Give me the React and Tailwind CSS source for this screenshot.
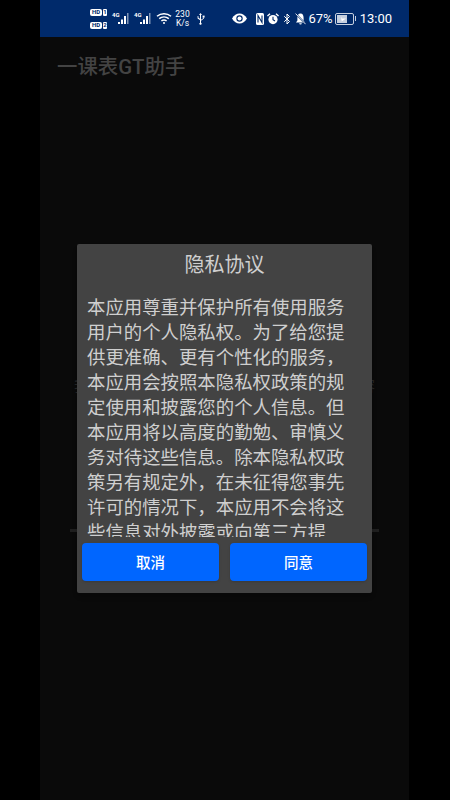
import React from 'react';
import { Bluetooth } from 'lucide-react';

const policy =
  '本应用尊重并保护所有使用服务用户的个人隐私权。为了给您提供更准确、更有个性化的服务，本应用会按照本隐私权政策的规定使用和披露您的个人信息。但本应用将以高度的勤勉、审慎义务对待这些信息。除本隐私权政策另有规定外，在未征得您事先许可的情况下，本应用不会将这些信息对外披露或向第三方提供。';

const SimBadge = ({ n }) => (
  <div className="flex items-center gap-[1px]">
    <span className="flex h-[7px] w-[12px] items-center justify-center rounded-[2px] bg-white text-[6px] font-bold leading-none text-[#002a6b]">HD</span>
    <span className="flex h-[7px] w-[4px] items-center justify-center rounded-[1px] bg-white text-[6px] font-bold leading-none text-[#002a6b]">{n}</span>
  </div>
);

const Signal = () => (
  <div className="relative h-[15px] w-[19px]">
    <span className="absolute left-0 top-0 text-[6px] font-bold leading-[7px] text-white">4G</span>
    <svg className="absolute left-0 top-0" width="19" height="15" viewBox="0 0 19 15">
      <rect x="6" y="11" width="2" height="2" fill="#fff" />
      <rect x="9" y="8.5" width="2" height="4.5" fill="#fff" />
      <rect x="12" y="5" width="2" height="8" fill="#fff" />
      <rect x="15" y="2" width="1.5" height="11" fill="#7f94b5" />
    </svg>
  </div>
);

const Wifi = () => (
  <svg width="16" height="13" viewBox="0 0 16 13" fill="none" stroke="#fff" strokeWidth="1.5">
    <path d="M1 4.2C5 .8 11 .8 15 4.2" />
    <path d="M3.2 6.6C6 4.3 10 4.3 12.8 6.6" />
    <path d="M5.4 9C6.9 7.8 9.1 7.8 10.6 9" />
    <circle cx="8" cy="11" r="1" fill="#fff" stroke="none" />
  </svg>
);

const UsbIcon = () => (
  <svg width="9" height="12" viewBox="0 0 9 12" fill="#fff">
    <path d="M4.5 0L6 2H5V8.4C5 9 5.3 9.3 5 9.6V10H5.4A1.1 1.1 0 1 1 3.6 10H4V2H3Z" />
    <path d="M1 3H2.4V4.6L4.2 6V7.2L1.6 5.4V3Z" />
    <rect x="6.6" y="2.6" width="2" height="2" />
    <path d="M7.2 4.4H8V5.6L5 7.8V6.8L7.2 5.2Z" />
  </svg>
);

const EyeIcon = () => (
  <svg width="15" height="11" viewBox="0 0 15 11">
    <path d="M0 5.5C2 2 4.6 .5 7.5 .5S13 2 15 5.5C13 9 10.4 10.5 7.5 10.5S2 9 0 5.5Z" fill="#fff" />
    <circle cx="7.5" cy="5.5" r="3.2" fill="#002a6b" />
    <circle cx="7.5" cy="5.5" r="2" fill="#fff" />
  </svg>
);

const Nfc = () => (
  <svg width="8" height="12" viewBox="0 0 8 12">
    <rect width="8" height="12" rx="1.5" fill="#fff" />
    <path d="M2 9.5V2.5L6 9.5V2.5" fill="none" stroke="#002a6b" strokeWidth="1.1" />
  </svg>
);

const AlarmIcon = () => (
  <svg width="12" height="12" viewBox="0 0 12 12">
    <circle cx="6" cy="6.6" r="4.6" fill="#fff" />
    <path d="M6 3.8V6.8L8 8" fill="none" stroke="#002a6b" strokeWidth="1.1" />
    <path d="M.4 3L3 .8M11.6 3L9 .8" stroke="#fff" strokeWidth="1.4" />
  </svg>
);

const BellIcon = () => (
  <svg width="11" height="12" viewBox="0 0 11 12">
    <path d="M5.5 .5C7.8 .5 8.6 2.6 8.6 5V7.6L10 9.4H1L2.4 7.6V5C2.4 2.6 3.2 .5 5.5 .5Z" fill="#fff" />
    <path d="M4.2 10.2H6.8A1.3 1.3 0 0 1 4.2 10.2Z" fill="#fff" />
    <path d="M1 1L10.5 11" stroke="#002a6b" strokeWidth="1.6" />
    <path d="M.6 .6L10.6 11.2" stroke="#fff" strokeWidth=".9" />
  </svg>
);

const Battery = () => (
  <div className="flex items-center gap-[1px]">
    <div className="flex h-[12px] w-[19px] items-center rounded-[2px] border border-[#c5cfdf] p-[1px]">
      <div className="flex h-full w-[67%] items-center justify-center bg-[#c5cfdf]">
        <svg width="9" height="6" viewBox="0 0 9 6"><path d="M0 3.4H4L5 0.5V2.6H9L4.6 5.5V3.4Z" fill="#fff" /></svg>
      </div>
    </div>
    <div className="h-[5px] w-[1px] bg-[#c5cfdf]" />
  </div>
);

const StatusBar = () => (
  <div className="flex h-[37px] shrink-0 items-center bg-[#002a6b] pl-[50px] pr-[17px] font-['Roboto',sans-serif] text-white">
    <div className="flex flex-col gap-[6px]">
      <SimBadge n="1" />
      <SimBadge n="2" />
    </div>
    <div className="ml-[5px] flex gap-[3px]">
      <Signal />
      <Signal />
    </div>
    <div className="ml-[3px]"><Wifi /></div>
    <div className="ml-[3px] w-[15px] text-center text-[8.5px] leading-[9px]">230<br />K/s</div>
    <div className="ml-[6px] flex"><UsbIcon /></div>
    <div className="ml-auto flex items-center">
      <EyeIcon />
      <div className="ml-[9px]"><Nfc /></div>
      <div className="ml-[3px]"><AlarmIcon /></div>
      <Bluetooth className="ml-[2px]" size={12} strokeWidth={2} />
      <div className="ml-[2px]"><BellIcon /></div>
      <span className="ml-[2px] text-[13px] leading-none">67%</span>
      <div className="ml-[2px]"><Battery /></div>
      <span className="ml-[4px] text-[13px] leading-none">13:00</span>
    </div>
  </div>
);

const PrivacyDialog = () => (
  <div className="absolute left-[37px] top-[244px] flex h-[349px] w-[295px] flex-col rounded-[2px] bg-[#434343] shadow-md">
    <h2 className="mt-[6px] h-[28px] text-center text-[20px] font-normal leading-[28px] text-[#cfcfcf]">隐私协议</h2>
    <div className="mx-[10px] mt-[16px] h-[243px] overflow-hidden text-[18.4px] leading-[25px] text-[#cfcfcf]">
      {policy}
    </div>
    <div className="mt-[6px] flex gap-[11px] px-[5px]">
      <button className="h-[38px] flex-1 rounded-[4px] bg-[#0066ff] text-[14.5px] font-medium text-white shadow-sm">取消</button>
      <button className="h-[38px] flex-1 rounded-[4px] bg-[#0066ff] text-[14.5px] font-medium text-white shadow-sm">同意</button>
    </div>
  </div>
);

export default function App() {
  return (
    <div className="h-[800px] w-[450px] overflow-hidden bg-black font-['Noto_Sans_CJK_SC','Liberation_Sans',sans-serif]">
      <div className="relative ml-[40px] flex h-full w-[369px] flex-col bg-[#0a0a0a]">
        <StatusBar />
        <h1 className="ml-[17px] mt-[16px] font-['Roboto','Noto_Sans_CJK_SC',sans-serif] text-[20.4px] font-medium leading-[28px] text-[#434343]">一课表GT助手</h1>
        <div className="mt-[294px] px-[34px] text-center text-[14px] leading-[20px] text-[#262626]">
          <div className="flex justify-between"><span>我</span><span>容</span></div>
        </div>
        <div className="mx-[30px] mt-[134px] h-[3px] bg-[#1f1f1f]" />
        <PrivacyDialog />
      </div>
    </div>
  );
}
